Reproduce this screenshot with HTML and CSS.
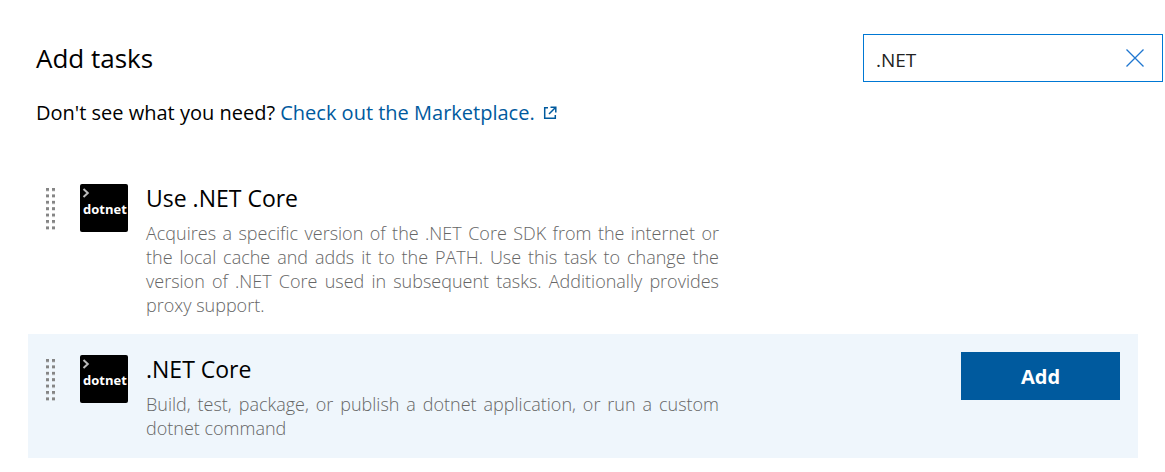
FILE: index.html
```html
<!DOCTYPE html>
<html lang="en">
<head>
<meta charset="utf-8">
<meta name="viewport" content="width=device-width, initial-scale=1">
<title>Add tasks</title>
<link rel="stylesheet" href="styles.css">
</head>
<body>
<svg class="defs" aria-hidden="true">
  <defs>
    <pattern id="dots" width="6" height="6.4" patternUnits="userSpaceOnUse">
      <rect width="3" height="3" fill="#858585"/>
    </pattern>
    <symbol id="grip" viewBox="0 0 9 42"><rect width="9" height="42" fill="url(#dots)"/></symbol>
    <symbol id="dotnet" viewBox="0 0 48 48">
      <rect width="48" height="48" rx="2" fill="#000"/>
      <path d="M3.5 5 7.8 9 3.5 13" fill="none" stroke="#bbb" stroke-width="2"/>
      <text x="3" y="30" class="logo-text">dotnet</text>
    </symbol>
  </defs>
</svg>
<main class="page">
  <header class="header">
    <h1 class="heading">Add tasks</h1>
    <div class="search">
      <input class="search-input" type="text" value=".NET" aria-label="Search tasks">
      <button class="clear" type="button" aria-label="Clear search">
        <svg width="18" height="18" viewBox="0 0 18 18"><path d="M.5.5l17 17M17.5.5l-17 17" fill="none" stroke="#1f76d0" stroke-width="1.3"/></svg>
      </button>
    </div>
  </header>
  <p class="hint">Don't see what you need?
    <a class="link" href="#">Check out the Marketplace.<svg class="external" width="14" height="14" viewBox="0 0 14 14" aria-hidden="true"><path d="M5 1.7H1.7v10.6h10.6V9M7.5 1.2h5.3v5.3M12.5 1.5 6 8" fill="none" stroke="currentColor" stroke-width="1.5"/></svg></a>
  </p>
  <ul class="tasks">
    <li class="task">
      <svg class="grip" width="9" height="42" aria-hidden="true"><use href="#grip"/></svg>
      <svg class="logo" width="48" height="48" aria-hidden="true"><use href="#dotnet"/></svg>
      <div class="info">
        <h2 class="name">Use .NET Core</h2>
        <p class="description">Acquires a specific version of the .NET Core SDK from the internet or the local cache and adds it to the PATH. Use this task to change the version of .NET Core used in subsequent tasks. Additionally provides proxy support.</p>
      </div>
    </li>
    <li class="task selected">
      <svg class="grip" width="9" height="42" aria-hidden="true"><use href="#grip"/></svg>
      <svg class="logo" width="48" height="48" aria-hidden="true"><use href="#dotnet"/></svg>
      <div class="info">
        <h2 class="name">.NET Core</h2>
        <p class="description">Build, test, package, or publish a dotnet application, or run a custom dotnet command</p>
      </div>
      <button class="add" type="button">Add</button>
    </li>
  </ul>
</main>
</body>
</html>
```
FILE: styles.css
```css
* { box-sizing: border-box; }
body {
  margin: 0;
  background: #fff;
  color: #000;
  font-family: "Open Sans", "Noto Sans", sans-serif;
}
.defs { position: absolute; width: 0; height: 0; }
.page { padding: 34px 2px 14px 28px; }
.header {
  display: flex;
  justify-content: space-between;
  align-items: center;
  padding-left: 8px;
}
.heading { margin: 0; font-size: 26px; line-height: 32px; font-weight: 400; }
.search {
  display: flex;
  align-items: center;
  width: 300px;
  height: 48px;
  padding: 0 18px 0 12px;
  border: 1px solid #0078d4;
}
.search-input {
  flex: 1;
  min-width: 0;
  padding: 3px 0 0;
  border: 0;
  outline: 0;
  background: none;
  color: #222;
  font: 400 19px/28px "Open Sans", "Noto Sans", sans-serif;
}
.clear { display: flex; padding: 0; border: 0; background: none; }
.hint { margin: 17px 0 0 8px; font-size: 20px; line-height: 28px; }
.link { color: #005a9e; text-decoration: none; }
.external { margin-left: 8px; }
.tasks { margin: 36px 25px 0 0; padding: 0; list-style: none; }
.task {
  display: flex;
  align-items: flex-start;
  padding: 18px 18px 17px;
}
.task + .task { margin-top: -1px; }
.selected { background: #eff6fc; }
.grip { flex: none; margin-top: 7px; }
.logo { flex: none; margin: 3px 18px 0 25px; }
.logo-text { fill: #fff; font: 700 13px "Open Sans", "Noto Sans", sans-serif; }
.info { width: 573px; padding-bottom: 1px; }
.name { margin: 0 0 6px; font-size: 23px; line-height: 34px; font-weight: 400; }
.description {
  margin: 0;
  color: #666;
  font-size: 18px;
  line-height: 24px;
  font-weight: 300;
  text-align: justify;
}
.add {
  width: 159px;
  height: 48px;
  margin-left: auto;
  padding: 2px 0 0;
  border: 0;
  background: #005a9e;
  color: #fff;
  font: 700 20px/28px "Open Sans", "Noto Sans", sans-serif;
}
```
